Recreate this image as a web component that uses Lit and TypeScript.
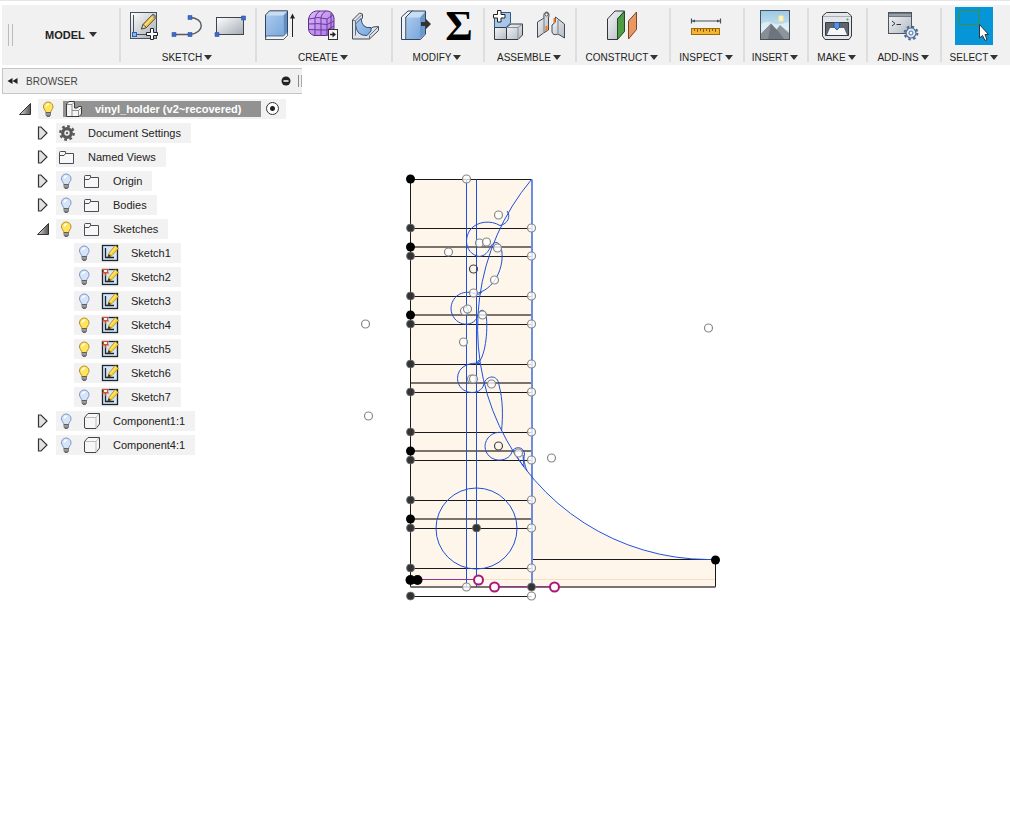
import { LitElement, html, svg, css, nothing } from "lit";
import { customElement, property, state } from "lit/decorators.js";
import { classMap } from "lit/directives/class-map.js";

const pencil = svg`
  <path d="M15 14.5 L25 4 L28.5 7 L18.5 17.5 L13.5 19 Z" fill="#f6c84a" stroke="#5a4a2a"/>
  <path d="M24 5 L27.5 8.3" stroke="#8a8a8a" stroke-width="2"/>
  <path d="M13.5 19 L15 14.5 L18.5 17.5 Z" fill="#f3dcc0" stroke="#3a3022" stroke-width=".7"/>
  <path d="M17 15 L25.5 6" stroke="#fdebaa"/>`;

const toolIcons: Record<string, unknown> = {
  createSketch: svg`
    <rect x="2.5" y="2.5" width="26" height="26" fill="url(#sheet)" stroke="#44505c"/>
    <path d="M5.5 5 V26 M4 24.5 H20" stroke="#44505c" fill="none"/>
    <rect x="4.5" y="22.5" width="4" height="4" fill="#8fb6ea" stroke="#2b5fb4"/>
    ${pencil}
    <path d="M22.5 18.5 h3 v4 h4 v3 h-4 v4 h-3 v-4 h-4 v-3 h4z" fill="#fff" stroke="#222"/>`,
  line: svg`
    <path d="M3 24.5 H19 C34 23 34 8 19 7.5" fill="none" stroke="#555b60" stroke-width="1.4"/>
    <path d="M1 22.5h4v4h-4z M17 22.5h4v4h-4z M17 5.5h4v4h-4z" fill="#3f6bc8" stroke="#2f56a8" stroke-width=".6"/>`,
  rectangle: svg`
    <rect x="2.5" y="7.5" width="27" height="17" fill="url(#sheet)" stroke="#3c454e"/>
    <path d="M1 22.5h4v4h-4z M27.5 6h4v4h-4z" fill="#3f6bc8" stroke="#2f56a8" stroke-width=".6"/>`,
  extrude: svg`
    <path d="M1.5 5 L5.5 .8 H23.5 V25.5 L19.5 29.5 H1.5 Z" fill="#c9dcf2" stroke="#35445a"/>
    <path d="M2 5.5 H19.5 V26 H2 Z" fill="url(#blue)"/>
    <path d="M19.5 5.5 L23 1.5 V22 L19.5 26 Z" fill="#5f8dc6"/>
    <path d="M2 26 H19.5 L23.5 22 V25.5 L19.5 29.5 H1.5 Z" fill="#f2f3f4" stroke="#35445a" stroke-width=".7"/>
    <path d="M28.5 27 V5" stroke="#222"/><path d="M26 8.5 L28.5 3.5 L31 8.5 Z" fill="#222"/>`,
  form: svg`
    <path d="M1.5 9 Q3 2 9 1 H21 Q26 2 27 8 V18 Q26 25 19 25.5 H7 Q1.5 24 1.5 18 Z" fill="url(#violet)" stroke="#5e2f92"/>
    <path d="M2 9 Q11 6 20 9 L26 5 M2 14 Q11 13 20 14.5 L27 11 M2 19.5 Q11 20 20 20 L27 16 M8 7.5 V25 M14 7 V25.5 M20 9 V25 M8 7.5 Q9 3 13 1 M14 7 Q15 3 19 1 M24 3 V24" fill="none" stroke="#6b36a3"/>
    <rect x="21.5" y="19.5" width="9" height="10" fill="#f6f6f6" stroke="#333"/>
    <path d="M23 24.5 H26" stroke="#222" stroke-width="1.5"/><path d="M25.5 21.5 L29 24.5 L25.5 27.5Z" fill="#222"/>`,
  sweep: svg`
    <path d="M2.5 10 L9.5 3 L12.5 4 V8 L8.5 12 V20 L14 24.5 L23 17 L28.5 16.5 V20.5 L19.5 29 H2.5 Z" fill="#dfe2e6" stroke="#444c55"/>
    <path d="M5.5 14 Q6 26 17 25.5 L21 21 V17.5 Q12 19 11 8.5 Z" fill="url(#blue)" stroke="#2e5183"/>
    <path d="M2.5 10 L5.5 11 L12 4.5 M5.5 11 V25.5 M19.5 29 V25.5 L28 17" fill="none" stroke="#66707a"/>`,
  pressPull: svg`
    <path d="M1.5 7 L8 1 H13 L6 7 V29.5 H1.5 Z" fill="#eef2f7" stroke="#35445a"/>
    <path d="M6 7 L12 1 H25.5 V24 L20.5 29.5 H6 Z" fill="#c9dcf2" stroke="#35445a"/>
    <path d="M6.5 7.5 H20 V29 H6.5 Z" fill="url(#blue)"/>
    <path d="M20 7.5 L25 2 V24 L20 29 Z" fill="#6d98cd"/>
    <path d="M21 12 H26 V9 L31 14 L26 19 V16 H21 Z" fill="#333"/>`,
  newComponent: svg`
    <path d="M2.5 7 L7 2.5 H18.5 V13 L14 17.5 H2.5 Z" fill="#a7c6ec" stroke="#36567f"/>
    <path d="M2.5 17.5 H14.5 V29.5 H2.5 Z" fill="url(#steel)" stroke="#333c45"/>
    <path d="M14.5 17.5 L19 14 H30.5 V25 L26 29.5 H14.5 Z" fill="url(#steel)" stroke="#333c45"/>
    <path d="M14.5 17.5 H26 L30.5 14 M26 17.5 V29" fill="none" stroke="#87909a"/>
    <path d="M5.5 .5h3.5v4h4v3.5h-4v4h-3.5v-4h-4v-3.5h4z" fill="#fff" stroke="#222"/>`,
  joint: svg`
    <path d="M2.5 12 L9 8 Q8 2 12 2 Q15 3 13.5 8 V20 L8.5 23 L2.5 27.5 Z" fill="url(#steel)" stroke="#444b53"/>
    <path d="M17 15 L20.5 12 V7 L29.5 14 V28 L23 24 Q18 26 17 22 Z" fill="url(#steel)" stroke="#444b53"/>
    <path d="M9 8 V22 M23 10 V23" stroke="#777f88"/>
    <path d="M11.5 16 V21 M19.5 8 V13" stroke="#ef7a22" stroke-width="2"/>
    <circle cx="11.5" cy="4.5" r="1.5" fill="#fff" stroke="#555"/>`,
  construct: svg`
    <path d="M1.5 9 L9 1 H18.5 L11.5 9 V29.5 H1.5 Z" fill="url(#steel)" stroke="#30363c"/>
    <path d="M11.5 9 L18.5 1.5 V21.5 L11.5 29.5 Z" fill="#4f9c45" stroke="#1f4a1c"/>
    <path d="M22.5 11 L30.5 2 V19.5 L22.5 29 Z" fill="#e99763" stroke="#7d4420"/>`,
  measure: svg`
    <path d="M1.5 8.5 V13.5 M30.5 8.5 V13.5 M2 11 H30" stroke="#44525f" stroke-width="1.2"/>
    <path d="M2 11 l3-1.500 v3z M30 11 l-3-1.500 v3z" fill="#44525f"/>
    <rect x="1.5" y="18.5" width="28" height="6" fill="#f5b62f" stroke="#9d6a12"/>
    <path d="M4.5 19v2 M7.5 19v3 M10.5 19v2 M13.5 19v3 M16.5 19v2 M19.5 19v3 M22.5 19v2 M25.5 19v3" stroke="#85580c"/>`,
  image: svg`
    <rect x="1.5" y=".5" width="29" height="29" fill="url(#sky)" stroke="#44525f"/>
    <path d="M20 6h4v5h-4z" fill="#fff5c2" stroke="#ffe79a"/>
    <path d="M2 14 Q8 10 13 13 T30 12 V20 H2Z" fill="#e9f4f8" opacity=".7"/>
    <path d="M14 24 L21 15 L30 23 V29 H12 Z" fill="#8d949c"/>
    <path d="M2 24 L12 13.5 L20 22 L25 29 H2 Z" fill="#6f757c"/>
    <path d="M12 13.5 L9 29 H2 V24 Z" fill="#888e95"/>`,
  print: svg`
    <path d="M1.5 6 L5.5 2.5 H26.5 L30.5 6 V26 L28 29.5 H4 L1.5 26 Z" fill="#e4e6e9" stroke="#333a41"/>
    <path d="M2 6.5 H30" stroke="#aab0b6"/><circle cx="26.5" cy="9.5" r="1" fill="#3aa655"/>
    <path d="M4.5 12.5 H27.5 V25.5 H4.5 Z" fill="#5d666f" stroke="#333a41"/>
    <path d="M9 18 H23 L26 25 H6 Z" fill="#f4f6f8"/>
    <path d="M13 12.5 H18.5 V17 L16 20 L13 17 Z" fill="#5c93dc" stroke="#2a5597"/>`,
  scripts: svg`
    <rect x="1.5" y="2.5" width="23" height="21" fill="url(#steel)" stroke="#4c555f"/>
    <rect x="2" y="3" width="22" height="4" fill="#6d7782"/><path d="M2 5h22" stroke="#c0c7ce"/>
    <path d="M5 11 L8 13.5 L5 16 M9.5 14.5 H14" stroke="#30363c" fill="none"/>
    <circle cx="24" cy="23" r="5" fill="#dfe9f6" stroke="#4e6a94" stroke-width="1.2"/>
    <circle cx="24" cy="23" r="6.4" fill="none" stroke="#4e6a94" stroke-width="2" stroke-dasharray="2.5 2.52"/>
    <circle cx="24" cy="23" r="2" fill="#fff" stroke="#4e6a94"/>`,
};

const bulb = (on: boolean) => svg`
  <path d="M10 3 a4.8 4.8 0 0 1 5 5 c0 2.5 -2.5 3.3 -2.5 6 h-4.5 c0 -2.7 -2.5 -3.5 -2.5 -6 a4.6 4.6 0 0 1 4.5 -5z"
    fill=${on ? "#ffe45c" : "#d5e4fb"} stroke=${on ? "#b3912a" : "#7f98c4"}/>
  <path d="M8 7.5 q1 -2.5 3 -2.5" fill="none" stroke="#fff" stroke-width="1.3"/>
  <path d="M8 13.5 h4.5 v2.5 l-1 1.5 h-2.5 l-1 -1.5z" fill="#777" stroke="#4a4a4a" stroke-width=".7"/>
  <path d="M8 15 h4.5" stroke="#ddd" stroke-width=".7"/>`;

const nodeIcons: Record<string, unknown> = {
  assembly: svg`
    <path d="M3.5 5 L6 2.5 H11.5 V9 H14 L16 7.5 H18.500 V15 L16 17.5 H3.5 Z" fill="#f4f4f4" stroke="#3a3a3a"/>
    <path d="M4 5.5 H9 L11.5 3 M9 5.5 V17 M9 11.5 H15.5 L18.5 8.5 M15.5 11.5 V17" fill="none" stroke="#777" stroke-width=".8"/>`,
  gear: svg`
    <circle cx="11" cy="10" r="4.3" fill="none" stroke="#585858" stroke-width="3.2"/>
    <circle cx="11" cy="10" r="6.7" fill="none" stroke="#585858" stroke-width="2.4" stroke-dasharray="2.7 2.56"/>
    <circle cx="11" cy="10" r="1.2" fill="#666"/>`,
  folder: svg`
    <path d="M3.5 16.5 V5.5 q0 -1 1 -1 H9.5 V6.5 H17.5 V16.5 Z" fill="#f7f7f7" stroke="#4a4d55"/>
    <path d="M4 8.5 H8 L9.5 6.5" fill="none" stroke="#4a4d55"/>`,
  sketch: svg`
    <rect x="3.5" y="2.5" width="15" height="15" fill="#d3e6f8" stroke="#1c2430" stroke-width="1.3"/>
    <path d="M6.5 5 V14.500 H15" fill="none" stroke="#222" stroke-width="1.3"/>
    <path d="M10 10 L16 2.5 L19.500 5.500 L13 12.500 L9 14 Z" fill="#fbd02f" stroke="#a07c14" stroke-width=".6"/>
    <path d="M11.500 10.500 L17 4" stroke="#fff0a0"/>
    <path d="M8.500 14.500 L9.700 11 L12 13.200Z" fill="#333"/>`,
  pin: svg`<path d="M3 2.5 h7 M4.5 2.5 v3 h4 v-3 M3 6 h7 M6.5 6 v3" fill="#fff" stroke="#d0502e" stroke-width="1.2"/>`,
  body: svg`
    <path d="M3.5 6.5 L7 2.5 H18.5 V13 L15 17.5 H5 Q3.5 17.5 3.5 16 Z" fill="#f7f7f7" stroke="#454545"/>
    <path d="M4 6.5 H15 L18 3 M15 6.5 V17" fill="none" stroke="#bbb"/>`,
};

interface Group { label: string; tools: string[]; }
const groups: Group[] = [
  { label: "SKETCH", tools: ["createSketch", "line", "rectangle"] },
  { label: "CREATE", tools: ["extrude", "form", "sweep"] },
  { label: "MODIFY", tools: ["pressPull", "sigma"] },
  { label: "ASSEMBLE", tools: ["newComponent", "joint"] },
  { label: "CONSTRUCT", tools: ["construct"] },
  { label: "INSPECT", tools: ["measure"] },
  { label: "INSERT", tools: ["image"] },
  { label: "MAKE", tools: ["print"] },
  { label: "ADD-INS", tools: ["scripts"] },
  { label: "SELECT", tools: ["select"] },
];

interface Node {
  name: string; level: number; icon: string;
  toggle?: "open" | "closed"; light?: boolean; pinned?: boolean; root?: boolean;
}
const nodes: Node[] = [
  { name: "vinyl_holder (v2~recovered)", level: 0, icon: "assembly", toggle: "open", light: true, root: true },
  { name: "Document Settings", level: 1, icon: "gear", toggle: "closed" },
  { name: "Named Views", level: 1, icon: "folder", toggle: "closed" },
  { name: "Origin", level: 1, icon: "folder", toggle: "closed", light: false },
  { name: "Bodies", level: 1, icon: "folder", toggle: "closed", light: false },
  { name: "Sketches", level: 1, icon: "folder", toggle: "open", light: true },
  { name: "Sketch1", level: 2, icon: "sketch", light: false },
  { name: "Sketch2", level: 2, icon: "sketch", light: false, pinned: true },
  { name: "Sketch3", level: 2, icon: "sketch", light: false },
  { name: "Sketch4", level: 2, icon: "sketch", light: true, pinned: true },
  { name: "Sketch5", level: 2, icon: "sketch", light: true, pinned: true },
  { name: "Sketch6", level: 2, icon: "sketch", light: true },
  { name: "Sketch7", level: 2, icon: "sketch", light: false, pinned: true },
  { name: "Component1:1", level: 1, icon: "body", toggle: "closed", light: false },
  { name: "Component4:1", level: 1, icon: "body", toggle: "closed", light: false },
];

const reset = css`
  button { font: inherit; color: inherit; background: none; border: 0; padding: 0; margin: 0; }
  svg { display: block; }
`;

@customElement("tool-bar")
class ToolBar extends LitElement {
  static styles = [reset, css`
    :host { display: block; padding: 4px 0 0 2px; border-top: 1px solid #e6e6e6; background: #fff; }
    .bar {
      display: grid;
      grid-template-columns: 117px 136px 136px 92px 92px 94px 74px 64px 59px 74px 68px;
      background: #f1f1f1; height: 60px;
    }
    .workspace { display: flex; align-items: center; }
    .grip { width: 3px; height: 22px; margin: 0 32px 0 6px; border: solid #bbb; border-width: 0 1px; }
    .model { display: flex; align-items: center; gap: 4px; font-weight: bold; font-size: 11px; }
    .group {
      display: flex; flex-direction: column; align-items: center; gap: 6px; padding-top: 2px;
      background: linear-gradient(#dedede, #dedede) 0 3px / 2px 54px no-repeat;
    }
    .tools { display: flex; gap: 11px; height: 38px; align-items: center; }
    .label { display: flex; align-items: center; gap: 2px; font-size: 10px; line-height: 14px; }
    .caret { border: solid transparent; border-width: 5px 4px 0; border-top-color: #333; margin-bottom: 2px; }
    .sum { overflow: visible; }
    .sigma { font: bold 42px "Liberation Serif", serif; fill: #000; }
  `];

  icon(name: string) {
    if (name === "select") return html`<svg width="38" height="38" aria-hidden="true">
      <rect width="38" height="38" fill="#0696d7"/>
      <rect x="4.5" y="3.5" width="20" height="14" fill="none" stroke="#3f8f3c"/>
      <path d="M24.5 17.5 V31 L27.5 28.5 L30 33.5 L32 32.5 L30 27.5 H33.5 Z" fill="#fff" stroke="#333"/></svg>`;
    if (name === "sigma") return html`<svg class="sum" width="32" height="32" aria-hidden="true">
      <text class="sigma" x="16" y="30" text-anchor="middle">Σ</text></svg>`;
    return html`<svg width="32" height="32" fill="none" aria-hidden="true">${toolIcons[name]}</svg>`;
  }

  render() {
    return html`
      <div class="bar" role="toolbar">
        <div class="workspace"><span class="grip"></span>
          <button class="model">MODEL <i class="caret"></i></button></div>
        ${groups.map((g) => html`<div class="group">
          <div class="tools">${g.tools.map((t) => html`<button aria-label=${t}>${this.icon(t)}</button>`)}</div>
          <button class="label">${g.label}<i class="caret"></i></button>
        </div>`)}
      </div>
      <svg width="0" height="0" aria-hidden="true"><defs>
        <linearGradient id="sheet" x2="1" y2="1"><stop stop-color="#fff"/><stop offset="1" stop-color="#a3abb5"/></linearGradient>
        <linearGradient id="blue" x2="1" y2="1"><stop stop-color="#a9c9ed"/><stop offset="1" stop-color="#7ba7dc"/></linearGradient>
        <linearGradient id="violet" x2="1" y2="1"><stop stop-color="#dcbcf7"/><stop offset="1" stop-color="#ab74e0"/></linearGradient>
        <linearGradient id="steel" x2="1" y2="1"><stop stop-color="#f6f7f8"/><stop offset="1" stop-color="#b1b8c1"/></linearGradient>
        <linearGradient id="sky" x2="0" y2="1"><stop stop-color="#9cc8e4"/><stop offset="1" stop-color="#e9f3f4"/></linearGradient>
      </defs></svg>`;
  }
}

@customElement("browser-panel")
class BrowserPanel extends LitElement {
  static styles = [reset, css`
    :host { display: block; font-size: 11px; color: #222; }
    .head {
      display: flex; align-items: center; height: 24px; width: 295px; padding-left: 4px;
      border: 1px solid #c6c6c6; border-right: 0; background: #f0f0f0; margin-bottom: 5px;
      font-size: 10px; color: #444;
    }
    .title { flex: 1; margin-left: 7px; }
    .handle { width: 2px; height: 12px; margin-left: 7px; border-left: 1px solid #888; border-right: 1px solid #aaa; }
    ul { list-style: none; margin: 0; padding: 0 0 0 16px; display: flex; flex-direction: column; gap: 4px; }
    li { display: flex; height: 20px; }
    .level-1 { padding-left: 18px; }
    .level-2 { padding-left: 36px; }
    .toggle { width: 20px; }
    .chip { display: flex; background: #f2f2f2; }
    .bulb { width: 20px; margin-right: 5px; }
    .name { display: flex; align-items: center; gap: 10px; padding-right: 10px; }
    .root { background: #929292; color: #fff; font-weight: bold; height: 16px; margin: 2px 0; padding-right: 20px; }
    input {
      appearance: none; width: 13px; height: 13px; margin: 3px 7px 0 5px; border: 1px solid #333; border-radius: 50%;
      background: radial-gradient(circle, #222 0 2px, #fff 3px);
    }
  `];
  @property({ attribute: false }) nodes: Node[] = [];

  row(n: Node) {
    return html`<li class=${`level-${n.level}`} role="treeitem">
      <button class="toggle" aria-label="Toggle ${n.name}" ?disabled=${!n.toggle}>
        <svg width="20" height="20" aria-hidden="true">${n.toggle === "open"
          ? svg`<path d="M1.5 15.5 L12.5 4.5 V15.5 Z" fill="url(#shade)" stroke="#333"/>`
          : n.toggle ? svg`<path d="M2.5 4 V16 H5 L11 10 L5 4 Z" fill="#e2e2e2" stroke="#333" stroke-width="1.2"/>` : nothing}</svg>
      </button>
      <div class="chip">
        ${n.light === undefined ? nothing : html`<button class="bulb" aria-label="Visibility of ${n.name}">
          <svg width="20" height="20" aria-hidden="true">${bulb(n.light)}</svg></button>`}
        <span class=${classMap({ name: true, root: !!n.root })}>
          <svg width="22" height="20" fill="none" aria-hidden="true">${nodeIcons[n.icon]}${n.pinned ? nodeIcons.pin : nothing}</svg>${n.name}</span>
        ${n.root ? html`<input type="radio" checked aria-label="Activate ${n.name}">` : nothing}
      </div>
    </li>`;
  }

  render() {
    return html`
      <div class="head">
        <button aria-label="Collapse"><svg width="12" height="10"><path d="M5.500 2 V8 L0.500 5Z M10.500 2 V8 L5.500 5Z" fill="#222"/></svg></button>
        <span class="title">BROWSER</span>
        <button aria-label="Minimise"><svg width="10" height="10"><circle cx="5" cy="5" r="4.5" fill="#222"/><path d="M2.5 5h5" stroke="#fff" stroke-width="1.5"/></svg></button>
        <span class="handle"></span>
      </div>
      <ul role="tree">${this.nodes.map((n) => this.row(n))}</ul>
      <svg width="0" height="0" aria-hidden="true"><defs>
        <linearGradient id="shade" x2="1"><stop stop-color="#ddd"/><stop offset="1" stop-color="#555"/></linearGradient>
      </defs></svg>`;
  }
}

const thinRows = [228, 256, 296, 324, 364, 392, 432, 460, 500, 528, 568, 596];
const thickRows = [247, 315, 383, 451, 519];
const openPoints = [
  [466, 179], [498, 215], [448, 252], [479, 243], [486, 242], [497, 248], [494, 280], [473, 293], [464, 311],
  [467, 309], [482, 315], [463, 342], [471, 379], [473, 379], [491, 384], [518, 453], [551, 458],
  [365, 324], [368, 416], [708, 328], [466, 587],
];

@customElement("sketch-canvas")
class SketchCanvas extends LitElement {
  static styles = css`
    :host { display: block; }
    svg { display: block; width: 100%; height: 100%; }
    .face { fill: #fff6eb; }
    .edge { stroke: #1a1a1a; fill: none; }
    .heavy { stroke: #78736d; stroke-width: 2; fill: none; }
    .curve { stroke: #1f50d8; fill: none; }
    .side { stroke: #6c8ee0; stroke-width: 2; fill: none; }
    .axis { stroke: #99308a; fill: none; }
    .ring { fill: #fffaf5; stroke: #a8187c; stroke-width: 2; }
    .open { fill: #fff; fill-opacity: .75; stroke: #888; stroke-width: 1.2; }
    .dark { fill: none; stroke: #444; stroke-width: 1.2; }
    .fixed { fill: #000; }
    .joined { fill: #333; stroke: #777; stroke-opacity: .8; }
    .guide { stroke: #f8dfc0; fill: none; }
  `;
  dot(kind: string, x: number, y: number, r = 4) {
    return svg`<circle class=${kind} cx=${x + 0.5} cy=${y} r=${r}/>`;
  }
  render() {
    return html`<svg role="img" aria-label="Sketch view"><g transform="translate(0 -65)">
      <path class="face" d="M410.5 179.5 H531.5 V478 A231.5 231.5 0 0 0 708 559.5 H715.5 V587 H410.5 Z"/>
      <path class="guide" d="M411 579.5 H715"/>
      ${thinRows.map((y) => svg`<path class="edge" d="M410.5 ${y + 0.5} H531.5"/>`)}
      ${thickRows.map((y) => svg`<path class="heavy" d="M410.5 ${y} H531.5"/>`)}
      <path class="edge" d="M531.5 179.5 H410.5 V587 M531.5 559.5 H715.5 V587"/>
      <path class="heavy" d="M410.5 587 H715.5"/>
      <path class="side" d="M532 179.5 V587"/>
      <path class="axis" d="M410 579.5 H479 M495 586.5 H555"/>
      <path class="curve" d="M466.5 179.5 V587 M476.5 179.5 V587"/>
      <circle class="curve" cx="476.5" cy="528.5" r="40.5"/>
      <path class="curve" d="M531.5 179.5 A231.5 231.5 0 0 0 708 559.5 H715.5"/>
      <path class="curve" d="M507 211 C511 216 508 224 500 225.5 C491 220 477 221 470 230 C463 241 467 254 479 256.5 C485 256 488 252 490 248"/>
      <path class="curve" d="M490.5 247 C493 241 499 241 501 247 C506 266 494 291 475 293.5"/>
      <path class="curve" d="M482 292 C477 296 478 294 475 293.5 C462 289 451 297 451 309 C452 325 472 330 478 316 C479 308 486 308 486.5 318 C488 336 484 362 476 364 L479 360"/>
      <path class="curve" d="M480 363.5 C470 362 457.5 366 457.5 378.5 C458 395 481 397 484 384 C486 375 498 374 499 385 C503 400 503 416 501.5 431"/>
      <path class="curve" d="M502 432.5 C493 431 485 438 485 446.5 C486 463 508 464 512 452 C514 446 524 446 524.5 454 C523 460 525 465 527 471 M514 453 L524 467 L523 455"/>
      ${thinRows.map((y) => [this.dot("joined", 410, y), this.dot("open", 531, y)])}
      ${[179, 247, 315, 451, 519].map((y) => this.dot("fixed", 410, y, 4.5))}
      ${openPoints.map(([x, y]) => this.dot("open", x, y))}
      ${this.dot("dark", 473, 269)}${this.dot("dark", 498, 446)}
      ${this.dot("joined", 476, 528)}${this.dot("joined", 531, 587)}
      ${this.dot("fixed", 410, 580, 5)}${this.dot("fixed", 417, 580, 5)}${this.dot("fixed", 715, 560, 4.5)}
      ${this.dot("ring", 478, 580, 4.5)}${this.dot("ring", 494, 587, 4.5)}${this.dot("ring", 554, 587, 4.5)}
    </g></svg>`;
  }
}

@customElement("app-root")
class AppRoot extends LitElement {
  static styles = css`
    :host {
      display: flex; flex-direction: column; min-height: 100vh; background: #fff; color: #222;
      font-family: "Liberation Sans", Arial, sans-serif;
    }
    main { flex: 1; display: grid; }
    sketch-canvas, browser-panel { grid-area: 1 / 1; }
    browser-panel { justify-self: start; align-self: start; margin: 3px 0 0 2px; z-index: 1; }
  `;
  @state() private tree = nodes;
  render() {
    return html`<tool-bar></tool-bar>
      <main>
        <sketch-canvas></sketch-canvas>
        <browser-panel .nodes=${this.tree}></browser-panel>
      </main>`;
  }
}
